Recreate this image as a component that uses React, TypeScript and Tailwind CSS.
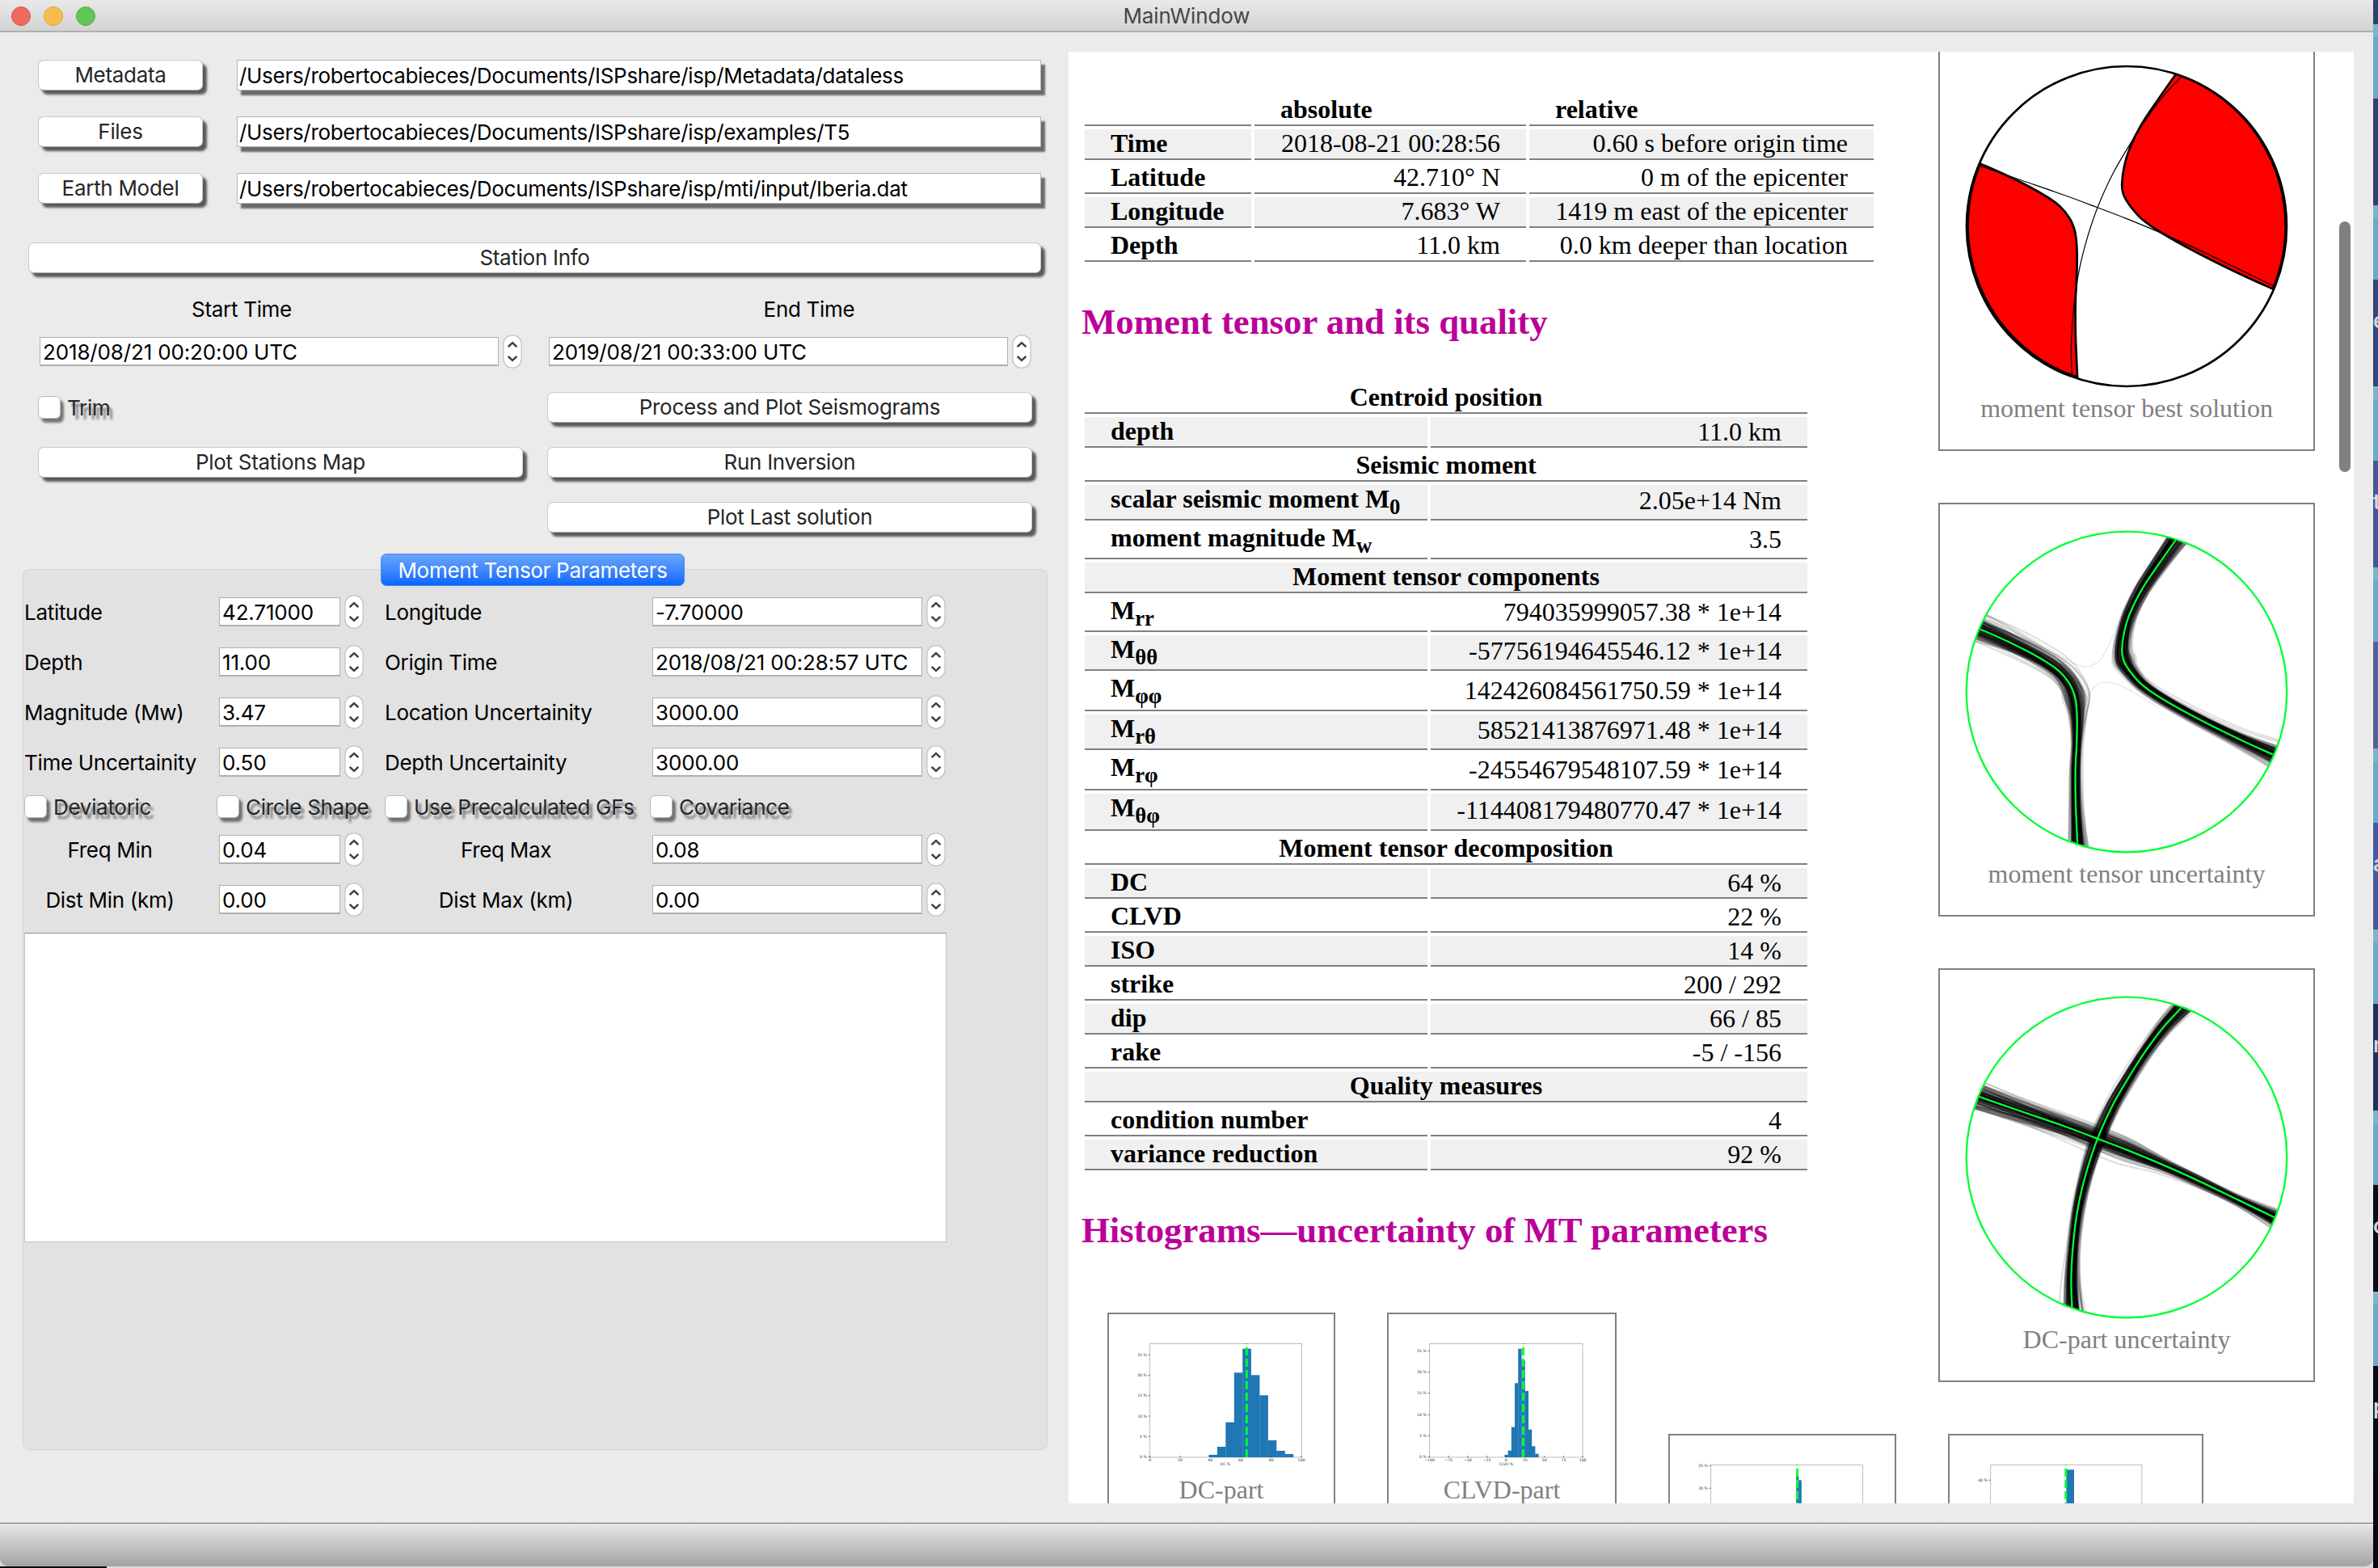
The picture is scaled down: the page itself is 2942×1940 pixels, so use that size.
import React from "react";

type Pt = [number, number];

/* ---------- form controls ---------- */

function Btn({ children, className = "" }: { children: React.ReactNode; className?: string }) {
  return (
    <div
      className={`flex h-[38px] items-center justify-center rounded-[7px] border border-[#c9c9c9] border-b-[#a8a8a8] bg-white pb-0.5 text-[#262626] shadow-[5px_5px_3px_rgba(0,0,0,0.62)] ${className}`}
    >
      {children}
    </div>
  );
}

function PathField({ children }: { children: React.ReactNode }) {
  return (
    <div className="flex h-[38px] w-[995px] items-center border border-[#b4b4b4] bg-white pl-[2px] shadow-[5px_6px_2px_rgba(0,0,0,0.55)]">
      {children}
    </div>
  );
}

function Spin({ value, className }: { value: string; className: string }) {
  return (
    <div className="flex h-[42px] items-center gap-[5px]">
      <div
        className={`flex h-9 items-center overflow-hidden border border-b-2 border-[#b0b0b0] bg-white pt-0.5 pl-[3px] tracking-[-0.15px] whitespace-nowrap ${className}`}
      >
        {value}
      </div>
      <svg width="24" height="42" viewBox="0 0 24 42" className="shrink-0">
        <rect x="0.9" y="0.9" width="22.2" height="40.2" rx="10.5" fill="#fff" stroke="#c3c3c3" strokeWidth="1.3" />
        <path d="M7.3 14.5 L12 10.2 L16.7 14.5 M7.3 27.5 L12 31.8 L16.7 27.5" fill="none" stroke="#404040" strokeWidth="2.4" strokeLinecap="round" />
      </svg>
    </div>
  );
}

function Check({ label, className = "" }: { label: string; className?: string }) {
  return (
    <div className={`flex h-7 items-center gap-[8px] whitespace-nowrap ${className}`}>
      <div className="size-7 shrink-0 rounded-[6px] border border-[#b9b9b9] bg-white shadow-[4px_5px_3px_rgba(0,0,0,0.5)]" />
      <span className="text-[#262626] [text-shadow:4px_5px_3px_rgba(0,0,0,0.5)]">{label}</span>
    </div>
  );
}

const params = [
  ["Latitude", "42.71000", "Longitude", "-7.70000"],
  ["Depth", "11.00", "Origin Time", "2018/08/21 00:28:57 UTC"],
  ["Magnitude (Mw)", "3.47", "Location Uncertainity", "3000.00"],
  ["Time Uncertainity", "0.50", "Depth Uncertainity", "3000.00"],
];
const ranges = [
  ["Freq Min", "0.04", "Freq Max", "0.08"],
  ["Dist Min (km)", "0.00", "Dist Max (km)", "0.00"],
];

function ParamRow({ row, centered = false }: { row: string[]; centered?: boolean }) {
  return (
    <div className="flex h-[42px] items-center whitespace-nowrap">
      <div className={centered ? "mr-[29px] w-[212px] pt-px text-center" : "w-[241px] pt-px"}>{row[0]}</div>
      <Spin value={row[1]} className="w-[150px]" />
      <div className={centered ? "mr-[32px] ml-[27px] w-[298px] pt-px text-center" : "ml-[26px] w-[331px] pt-px"}>{row[2]}</div>
      <Spin value={row[3]} className="w-[334px]" />
    </div>
  );
}

function FormPanel() {
  return (
    <section className="w-[1322px] shrink-0 text-[26px] tracking-[-0.3px] text-black">
      <div className="mt-[34px] ml-[47px] flex flex-col gap-8">
        {[
          ["Metadata", "/Users/robertocabieces/Documents/ISPshare/isp/Metadata/dataless"],
          ["Files", "/Users/robertocabieces/Documents/ISPshare/isp/examples/T5"],
          ["Earth Model", "/Users/robertocabieces/Documents/ISPshare/isp/mti/input/Iberia.dat"],
        ].map(([name, path]) => (
          <div key={name} className="flex gap-[42px]">
            <Btn className="w-[204px]">{name}</Btn>
            <PathField>{path}</PathField>
          </div>
        ))}
      </div>
      <Btn className="mt-12 ml-[35px] w-[1253px]">Station Info</Btn>
      <div className="mt-[25px] ml-12 flex h-[38px] items-center text-center">
        <div className="w-[502px]">Start Time</div>
        <div className="ml-[153px] w-[596px]">End Time</div>
      </div>
      <div className="mt-[13px] ml-[49px] flex gap-[33px]">
        <Spin value="2018/08/21 00:20:00 UTC" className="w-[568px]" />
        <Spin value="2019/08/21 00:33:00 UTC" className="w-[568px]" />
      </div>
      <div className="mt-[29px] ml-[47px] grid w-[1231px] grid-cols-[600px_600px] gap-x-[30px] gap-y-[30px]">
        <Check label="Trim" className="mt-[5px]" />
        <Btn>Process and Plot Seismograms</Btn>
        <Btn>Plot Stations Map</Btn>
        <Btn>Run Inversion</Btn>
        <div />
        <Btn>Plot Last solution</Btn>
      </div>
      <div className="relative mt-[45px] ml-7 h-[1090px] w-[1268px] rounded-[8px] border border-[#d5d5d5] bg-[#e2e2e2] pt-[31px] pl-px">
        <div className="absolute top-[-20px] left-[442px] flex h-[40px] w-[376px] items-center justify-center rounded-[7px] border border-[#3f86f0] bg-linear-to-b from-[#6ba5fa] to-[#0665fd] text-white">
          Moment Tensor Parameters
        </div>
        <div className="flex flex-col gap-5">
          {params.map((r) => (
            <ParamRow key={r[0]} row={r} />
          ))}
          <div className="flex">
            <Check label="Deviatoric" className="w-[238px]" />
            <Check label="Circle Shape" className="w-[208px]" />
            <Check label="Use Precalculated GFs" className="w-[328px]" />
            <Check label="Covariance" />
          </div>
          <div className="-mt-0.5 flex flex-col gap-5">
            {ranges.map((r) => (
              <ParamRow key={r[0]} row={r} centered />
            ))}
          </div>
          <div className="h-[383px] w-[1141px] border border-[#c3c3c3] border-t-[#8e8e8e] bg-white" />
        </div>
      </div>
    </section>
  );
}

/* ---------- report tables ---------- */

const locRows = [
  ["Time", "2018-08-21 00:28:56", "0.60 s before origin time"],
  ["Latitude", "42.710° N", "0 m of the epicenter"],
  ["Longitude", "7.683° W", "1419 m east of the epicenter"],
  ["Depth", "11.0 km", "0.0 km deeper than location"],
];

function LocationTable() {
  const cell = "h-[38px] border-b-2 border-[#808080] px-8 leading-[35px] whitespace-nowrap";
  return (
    <div className="ml-5 grid w-[976px] grid-cols-[206px_336px_426px] gap-1">
      <div className={cell} />
      <div className={`${cell} font-bold`}>absolute</div>
      <div className={`${cell} font-bold`}>relative</div>
      {locRows.map((r, i) => {
        const bg = i % 2 === 0 ? "bg-[#f0f0f0]" : "";
        return (
          <React.Fragment key={r[0]}>
            <div className={`${cell} ${bg} font-bold`}>{r[0]}</div>
            <div className={`${cell} ${bg} text-right`}>{r[1]}</div>
            <div className={`${cell} ${bg} text-right`}>{r[2]}</div>
          </React.Fragment>
        );
      })}
    </div>
  );
}

type Row = { head?: string; label?: string; sub?: string; value?: string; tall?: boolean };
const mtRows: Row[] = [
  { head: "Centroid position" },
  { label: "depth", value: "11.0 km" },
  { head: "Seismic moment" },
  { label: "scalar seismic moment M", sub: "0", value: "2.05e+14 Nm" },
  { label: "moment magnitude M", sub: "w", value: "3.5" },
  { head: "Moment tensor components" },
  { label: "M", sub: "rr", value: "794035999057.38 * 1e+14" },
  { label: "M", sub: "θθ", value: "-57756194645546.12 * 1e+14" },
  { label: "M", sub: "φφ", value: "142426084561750.59 * 1e+14", tall: true },
  { label: "M", sub: "rθ", value: "58521413876971.48 * 1e+14" },
  { label: "M", sub: "rφ", value: "-24554679548107.59 * 1e+14", tall: true },
  { label: "M", sub: "θφ", value: "-114408179480770.47 * 1e+14", tall: true },
  { head: "Moment tensor decomposition" },
  { label: "DC", value: "64 %" },
  { label: "CLVD", value: "22 %" },
  { label: "ISO", value: "14 %" },
  { label: "strike", value: "200 / 292" },
  { label: "dip", value: "66 / 85" },
  { label: "rake", value: "-5 / -156" },
  { head: "Quality measures" },
  { label: "condition number", value: "4" },
  { label: "variance reduction", value: "92 %" },
];

function TensorTable() {
  return (
    <div className="ml-5 flex w-[894px] flex-col gap-1">
      {mtRows.map((r, i) => {
        const bg = i % 2 === 1 ? "bg-[#f0f0f0]" : "";
        if (r.head) {
          return (
            <div key={i} className={`h-[38px] border-b-2 border-[#808080] text-center leading-[35px] font-bold ${bg}`}>
              {r.head}
            </div>
          );
        }
        const h = r.tall ? "h-[46px]" : r.sub ? "h-[44px]" : "h-[38px]";
        return (
          <div key={i} className={`grid grid-cols-[424px_466px] gap-1 whitespace-nowrap ${h}`}>
            <div className={`border-b-2 border-[#808080] px-8 leading-[35px] font-bold ${bg}`}>
              {r.label}
              {r.sub && <span className="relative top-2 text-[26.7px] leading-none">{r.sub}</span>}
            </div>
            <div
              className={`flex items-center justify-end border-b-2 border-[#808080] px-8 leading-[35px] ${r.sub ? "pb-1" : ""} ${bg}`}
            >
              {r.value}
            </div>
          </div>
        );
      })}
    </div>
  );
}

/* ---------- focal mechanism plots ---------- */

const lobeRight: Pt[] = [[60.9, -188.2], [39, -157], [18.2, -125.7], [4, -97], [-3, -74], [-5.8, -52], [-3.8, -39], [3, -27], [18.2, -9.6], [42.3, 7.5], [85, 31.5], [137, 57.5], [180.8, 77.5]];
const lobeLeft: Pt[] = [[-181.1, -77.5], [-148.9, -63.2], [-111.7, -44.3], [-85.7, -27.5], [-70.9, -10.5], [-63.8, 7], [-61.4, 31.4], [-61.8, 63.6], [-63.3, 95.7], [-63, 138.6], [-60.9, 186.8]];
const planeA: Pt[] = [[67.2, -184.6], [44.2, -159.6], [21.9, -129.3], [2.5, -98.9], [-17.1, -65], [-36, -23.2], [-50.5, 20.7], [-60.5, 63.6], [-66.4, 110], [-68.6, 149.3], [-67.6, 185]];
const planeB: Pt[] = [[-182.3, -75], [-130.3, -57], [-78.3, -39], [-36, -23.2], [-0.4, -9.6], [44.2, 8.9], [85, 27.1], [137, 52.1], [183, 74.3]];

function spline(p: Pt[]) {
  let d = "";
  for (let i = 0; i < p.length - 1; i++) {
    const a = p[Math.max(0, i - 1)];
    const b = p[i];
    const c = p[i + 1];
    const e = p[Math.min(p.length - 1, i + 2)];
    d += ` C${(b[0] + (c[0] - a[0]) / 6).toFixed(2)} ${(b[1] + (c[1] - a[1]) / 6).toFixed(2)} ${(c[0] - (e[0] - b[0]) / 6).toFixed(2)} ${(c[1] - (e[1] - b[1]) / 6).toFixed(2)} ${c[0]} ${c[1]}`;
  }
  return d;
}
const open = (p: Pt[]) => `M${p[0][0]} ${p[0][1]}${spline(p)}`;

/* Extends both ends past the rim so that shifted copies reach the clip circle. */
function extend(p: Pt[]): Pt[] {
  const n = p.length;
  const f = (a: Pt, b: Pt): Pt => [a[0] + (a[0] - b[0]) * 0.6, a[1] + (a[1] - b[1]) * 0.6];
  return [f(p[0], p[1]), ...p, f(p[n - 1], p[n - 2])];
}

function bundle(base: Pt[], sigma: number[], count: number, seed: number) {
  let s = seed;
  const rnd = () => {
    s = (s * 16807) % 2147483647;
    return s / 2147483647;
  };
  const gauss = () => (rnd() + rnd() + rnd() + rnd() + rnd() + rnd() - 3) * 1.41;
  const p = extend(base);
  const n = p.length;
  return Array.from({ length: count }, () => {
    const g = [gauss(), gauss(), gauss()];
    const q = p.map((pt, i): Pt => {
      const t = i / (n - 1);
      const k = t * (sigma.length - 1);
      const j = Math.min(sigma.length - 2, Math.floor(k));
      const amp = sigma[j] + (sigma[j + 1] - sigma[j]) * (k - j);
      const off = amp * (t < 0.5 ? g[0] + (g[1] - g[0]) * t * 2 : g[1] + (g[2] - g[1]) * (t * 2 - 1));
      const a = p[Math.max(0, i - 1)];
      const b = p[Math.min(n - 1, i + 1)];
      const dx = b[0] - a[0];
      const dy = b[1] - a[1];
      const l = Math.hypot(dx, dy);
      return [+(pt[0] + (dy / l) * off).toFixed(2), +(pt[1] - (dx / l) * off).toFixed(2)];
    });
    return open(q);
  });
}

const tensorBundle = [
  ...bundle(lobeRight, [7, 6, 5, 5.5, 4, 4.5, 8.5], 180, 4211),
  ...bundle(lobeLeft, [9, 9, 8, 7, 4, 4.5, 7], 180, 90229),
];
const dcBundle = [
  ...bundle(planeA, [7, 5, 4, 4.5, 7], 180, 77177),
  ...bundle(planeB, [9.5, 9, 7.5, 4.5, 4, 9], 180, 30343),
];

function Figure({ caption, children }: { caption: string; children: React.ReactNode }) {
  return (
    <figure className="flex h-[512px] w-[466px] shrink-0 flex-col items-center border-2 border-[#808080] pt-8">
      <svg width="400" height="400" viewBox="-200 -200 400 400">
        <clipPath id="disc">
          <circle r="198" />
        </clipPath>
        {children}
      </svg>
      <figcaption className="mt-[7px] leading-9 text-[#808080]">{caption}</figcaption>
    </figure>
  );
}

function BestSolution() {
  return (
    <Figure caption="moment tensor best solution">
      <g stroke="#000" strokeWidth="2.7" strokeLinejoin="round">
        <circle r="198" fill="#fff" />
        <path d={`${open(lobeRight)} A198 198 0 0 0 60.9 -188.2 Z`} fill="#f00" />
        <path d={`${open(lobeLeft)} A198 198 0 0 1 -181.1 -77.5 Z`} fill="#f00" />
      </g>
      <g fill="none" stroke="#000" strokeWidth="1.2">
        <path d={open(planeA)} />
        <path d={open(planeB)} />
      </g>
    </Figure>
  );
}

function Uncertainty({ caption, lines, best, faint }: { caption: string; lines: string[]; best: Pt[][]; faint?: Pt[][] }) {
  return (
    <Figure caption={caption}>
      <g clipPath="url(#disc)" fill="none" stroke="#000" strokeWidth="2" strokeOpacity="0.13">
        {lines.map((d, i) => (
          <path key={i} d={d} />
        ))}
        {faint?.map((p, i) => (
          <path key={i} d={open(p)} strokeWidth="1.2" strokeOpacity="0.1" />
        ))}
      </g>
      <g fill="none" stroke="#00ff33" strokeWidth="2.3">
        <circle r="198.3" />
        {best.map((p, i) => (
          <path key={i} d={open(p)} />
        ))}
      </g>
    </Figure>
  );
}

/* ---------- histograms ---------- */

type Hist = {
  right: number;
  bars: [number, number, number][];
  mark: number;
  yt: [number, string][];
  xt: [number, string][];
  xlabel?: [number, string];
};

const evenBars = (x: number, w: number, tops: number[]) => tops.map((t, i): [number, number, number] => [x + i * w, w, t]);

const hists: Hist[] = [
  {
    right: 240.5,
    bars: evenBars(125.4, 10.47, [176, 166, 135.7, 74.3, 44.7, 77.3, 102.3, 158, 171, 175]),
    mark: 172.3,
    yt: [[52.3, "25 %"], [77.7, "20 %"], [102.7, "15 %"], [128, "10 %"], [153.3, "5 %"], [178.7, "0 %"]],
    xt: [[52.7, "0"], [90, "20"], [127.3, "40"], [165, "60"], [202.8, "80"], [240, "100"]],
    xlabel: [146, "DC %"],
  },
  {
    right: 242.1,
    bars: evenBars(145.4, 4.2, [176, 170.7, 141.7, 87.3, 44.7, 59, 97, 144.7, 165.3, 174.7]),
    mark: 168.5,
    yt: [[47.3, "25 %"], [73.7, "20 %"], [99.7, "15 %"], [126.3, "10 %"], [152.3, "5 %"], [178.7, "0 %"]],
    xt: [[52.5, "−100"], [76.2, "−75"], [99.9, "−50"], [123.6, "−25"], [147.3, "0"], [171, "25"], [194.7, "50"], [218.4, "75"], [242.1, "100"]],
    xlabel: [147.3, "CLVD %"],
  },
  { right: 240.5, bars: [[158.2, 2.9, 52.7], [161.1, 3.5, 57.3]], mark: 159.6, yt: [[39.3, "25 %"], [67.3, "20 %"]], xt: [] },
  { right: 239.9, bars: [[146.4, 9.4, 44.3]], mark: 145.8, yt: [[57.3, "40 %"]], xt: [] },
];

function Histogram({ h }: { h: Hist }) {
  return (
    <svg width="280" height="200" viewBox="0 0 280 200" className="-mt-0.5 -ml-0.5 shrink-0" fontFamily="'DejaVu Sans', sans-serif" fontSize="4.6" fill="#333">
      <rect x="52.6" y="38.5" width={h.right - 52.6} height="140.5" fill="none" stroke="#bdbdbd" strokeWidth="1" />
      {h.bars.map(([x, w, t], i) => (
        <rect key={i} x={x} y={t} width={w + 0.2} height={179 - t} fill="#1f77b4" />
      ))}
      <path d={`M${h.mark} 179 V38`} stroke="#00ff33" strokeWidth="3" strokeDasharray="10 4" />
      {h.yt.map(([y, s]) => (
        <g key={s}>
          <path d={`M50.5 ${y} H52.6`} stroke="#444" strokeWidth="0.8" />
          <text x="48.8" y={y + 1.6} textAnchor="end">{s}</text>
        </g>
      ))}
      {h.xt.map(([x, s]) => (
        <g key={s}>
          <path d={`M${x} 177 V179`} stroke="#444" strokeWidth="0.8" />
          <text x={x} y="183.6" textAnchor="middle">{s}</text>
        </g>
      ))}
      {h.xlabel && <text x={h.xlabel[0]} y="189.4" textAnchor="middle">{h.xlabel[1]}</text>}
    </svg>
  );
}

function HistBox({ h, caption, className }: { h: Hist; caption?: string; className: string }) {
  return (
    <figure className={`flex h-[300px] shrink-0 flex-col overflow-hidden border-2 border-[#808080] ${className}`}>
      <Histogram h={h} />
      {caption && <figcaption className="mt-px text-center leading-9 text-[#808080]">{caption}</figcaption>}
    </figure>
  );
}

function Report() {
  const heading = "ml-[16px] text-[44.8px] leading-[52px] font-bold whitespace-nowrap text-[#bb0099]";
  return (
    <section className="mt-6 flex h-[1796px] w-[1590px] overflow-hidden bg-white font-['Liberation_Serif',serif] text-[32px] text-black">
      <div className="w-[1076px] shrink-0 pt-[54px]">
        <LocationTable />
        <h2 className={`mt-[48px] ${heading}`}>Moment tensor and its quality</h2>
        <div className="mt-[50px]">
          <TensorTable />
        </div>
        <h2 className={`mt-[48px] ${heading}`}>Histograms—uncertainty of MT parameters</h2>
        <div className="mt-[76px] ml-12 flex items-start gap-16">
          <HistBox h={hists[0]} caption="DC-part" className="w-[282px]" />
          <HistBox h={hists[1]} caption="CLVD-part" className="w-[284px]" />
          <HistBox h={hists[2]} className="mt-[150px] w-[282px]" />
          <HistBox h={hists[3]} className="mt-[150px] w-[316px]" />
        </div>
      </div>
      <div className="-mt-[18px] flex h-[1664px] w-[466px] shrink-0 flex-col gap-16">
        <BestSolution />
        <Uncertainty
          caption="moment tensor uncertainty"
          lines={tensorBundle}
          best={[lobeRight, lobeLeft]}
          faint={[
            [[-175, -97], [-111.7, -63], [-59.8, -32.9], [-36, -37], [-20, -62], [0, -110]],
            [[-55, 40], [-50, 12], [-40, -6], [-26, -12], [0, -4], [40, 20]],
          ]}
        />
        <Uncertainty caption="DC-part uncertainty" lines={dcBundle} best={[planeA, planeB]} />
      </div>
      <div className="mt-[210px] ml-[30px] h-[310px] w-3.5 rounded-full bg-[#808080]" />
    </section>
  );
}

/* ---------- window and desktop ---------- */

const strips = [
  { dark: "bg-[#2c4275]", ch: "" },
  { dark: "bg-[#30467f]", ch: "e" },
  { dark: "bg-[#445896]", ch: "t" },
  { dark: "bg-[#51639f]", ch: "" },
  { dark: "bg-[#465a9f]", ch: "a" },
  { dark: "bg-[#1c3163]", ch: "n" },
  { dark: "bg-[#060d18]", ch: "o" },
  { dark: "bg-[#050a10]", ch: "p" },
];

export default function App() {
  return (
    <div className="flex h-[1940px] w-[2942px] overflow-hidden bg-[#d9dad9] font-[Inter,sans-serif]">
      <div className="flex w-[2936px] shrink-0 flex-col">
        <header className="grid h-10 shrink-0 grid-cols-3 items-center border-b-2 border-[#b0b0b0] bg-linear-to-b from-[#e9e9e9] to-[#d3d3d3] pb-0.5">
          <div className="flex gap-4 pl-3.5">
            <div className="size-6 rounded-full border border-[#dd5146] bg-[#ee6a5e]" />
            <div className="size-6 rounded-full border border-[#dda237] bg-[#f5be4f]" />
            <div className="size-6 rounded-full border border-[#4fb03d] bg-[#62c654]" />
          </div>
          <div className="text-center text-[26px] tracking-[-0.1px] text-[#464646]">MainWindow</div>
        </header>
        <main className="flex h-[1844px] shrink-0 bg-[#ebebeb]">
          <FormPanel />
          <Report />
        </main>
        <div className="h-[54px] shrink-0 rounded-b-[10px] border-t border-t-[#6a6a6a] bg-linear-to-b from-[#e8e8e8] to-[#a3a3a3]" />
        <div className="flex h-0.5">
          <div className="w-[132px] bg-[#060b12]" />
        </div>
      </div>
      <div className="w-1.5 shrink-0 overflow-hidden bg-[#2b4172]">
        <div className="h-[30px]" />
        {strips.map((s, i) => (
          <div key={i} className="h-[224px]">
            <div className="h-4 bg-[#82b1cd]" />
            <div className="h-[76px] bg-[#6ca8cc]" />
            <div className={`h-[132px] pt-[31px] text-[26px] font-semibold text-[#d6d8dc] ${s.dark}`}>{s.ch}</div>
          </div>
        ))}
        <div className="h-[200px] bg-[#04070b]" />
      </div>
    </div>
  );
}
